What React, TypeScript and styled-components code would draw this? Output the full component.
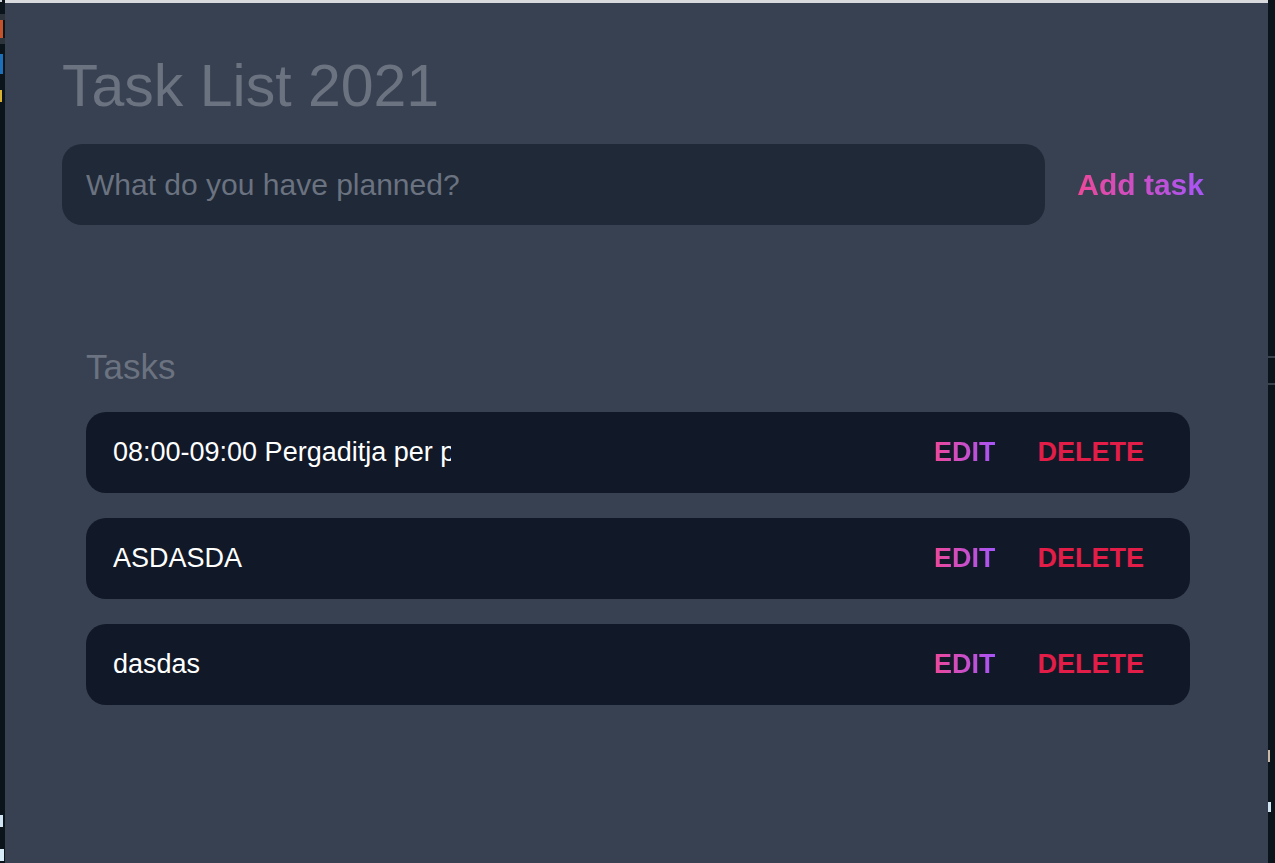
import React from "react";
import styled, { createGlobalStyle } from "styled-components";

const Global = createGlobalStyle`
  html, body { margin: 0; padding: 0; background: #0b131b; }
  body { font-family: "Liberation Sans", Arial, sans-serif; }
  * { box-sizing: border-box; }
`;

const Screen = styled.div`
  display: grid;
  grid-template-columns: 5px 1fr 7px;
  width: 1275px;
  height: 863px;
  overflow: hidden;
  background: #0b131b;
`;

const EdgeColumn = styled.div`
  display: flex;
  flex-direction: column;
  align-items: flex-start;
  background: #0b131b;
`;

const EdgeMark = styled.div<{ $top: number; $h: number; $w?: number; $color: string }>`
  margin-top: ${(p) => p.$top}px;
  height: ${(p) => p.$h}px;
  width: ${(p) => p.$w ?? 5}px;
  background: ${(p) => p.$color};
  flex-shrink: 0;
`;

const Panel = styled.main`
  background: #374151;
  border-top: 3px solid #d8dadd;
  padding: 53px 56px 0 57px;
  min-width: 0;
`;

const Title = styled.h1`
  margin: 0;
  font-size: 59px;
  line-height: 60px;
  font-weight: 400;
  color: #6b7280;
`;

const Form = styled.form`
  display: flex;
  align-items: stretch;
  margin-top: 28px;
`;

const TaskInput = styled.input`
  flex: 1;
  min-width: 0;
  height: 81px;
  padding: 0 24px;
  border: none;
  border-radius: 20px;
  background: #1f2937;
  color: #e5e7eb;
  font-family: inherit;
  font-size: 30px;
  outline: none;
  &::placeholder { color: #6b7280; }
`;

const GradientText = styled.span`
  background: linear-gradient(to right, #ec4899, #a855f7);
  -webkit-background-clip: text;
  background-clip: text;
  color: transparent;
`;

const AddButton = styled.button`
  margin-left: 24px;
  padding: 0 8px;
  border: none;
  background: transparent;
  font-family: inherit;
  font-size: 30px;
  font-weight: 700;
  cursor: pointer;
`;

const TasksSection = styled.section`
  margin-top: 124px;
  padding: 0 22px 0 24px;
`;

const SectionHeading = styled.h2`
  margin: 0;
  font-size: 35px;
  line-height: 35px;
  font-weight: 400;
  color: #6b7280;
`;

const TaskListBox = styled.div`
  display: flex;
  flex-direction: column;
  gap: 25px;
  margin-top: 28px;
`;

const TaskRow = styled.div`
  display: flex;
  align-items: center;
  height: 81px;
  padding: 0 24px 0 27px;
  border-radius: 20px;
  background: #111827;
`;

const TaskText = styled.input`
  width: 338px;
  padding: 0;
  border: none;
  background: transparent;
  color: #ffffff;
  font-family: inherit;
  font-size: 27px;
  outline: none;
`;

const Actions = styled.div`
  display: flex;
  margin-left: auto;
`;

const ActionButton = styled.button<{ $danger?: boolean }>`
  padding: 0 ${(p) => (p.$danger ? "22px" : "20px")} 0 22px;
  border: none;
  background: transparent;
  font-family: inherit;
  font-size: 27px;
  font-weight: 700;
  text-transform: uppercase;
  color: ${(p) => (p.$danger ? "#e11d48" : "inherit")};
  cursor: pointer;
`;

const tasks = ["08:00-09:00 Pergaditja per pune", "ASDASDA", "dasdas"];

export default function App() {
  return (
    <>
      <Global />
      <Screen>
        <EdgeColumn>
          <EdgeMark $top={0} $h={2} $w={2} $color="#cfd3d8" />
          <EdgeMark $top={12} $h={6} $color="#2d343c" />
          <EdgeMark $top={0} $h={18} $w={3} $color="#c4532b" />
          <EdgeMark $top={0} $h={6} $color="#2d343c" />
          <EdgeMark $top={10} $h={20} $w={3} $color="#1d6fb8" />
          <EdgeMark $top={16} $h={12} $w={2} $color="#d8b230" />
          <EdgeMark $top={713} $h={12} $w={3} $color="#cfe3f2" />
          <EdgeMark $top={22} $h={12} $w={4} $color="#d6ecf8" />
        </EdgeColumn>
        <Panel>
          <Title>Task List 2021</Title>
          <Form onSubmit={(e) => e.preventDefault()}>
            <TaskInput placeholder="What do you have planned?" />
            <AddButton type="submit">
              <GradientText>Add task</GradientText>
            </AddButton>
          </Form>
          <TasksSection>
            <SectionHeading>Tasks</SectionHeading>
            <TaskListBox>
              {tasks.map((t) => (
                <TaskRow key={t}>
                  <TaskText type="text" value={t} readOnly />
                  <Actions>
                    <ActionButton>
                      <GradientText>Edit</GradientText>
                    </ActionButton>
                    <ActionButton $danger>Delete</ActionButton>
                  </Actions>
                </TaskRow>
              ))}
            </TaskListBox>
          </TasksSection>
        </Panel>
        <EdgeColumn>
          <EdgeMark $top={356} $h={2} $w={7} $color="#39414c" />
          <EdgeMark $top={25} $h={2} $w={7} $color="#39414c" />
          <EdgeMark $top={365} $h={12} $w={2} $color="#c9b9a5" />
          <EdgeMark $top={40} $h={10} $w={3} $color="#cfe3f2" />
        </EdgeColumn>
      </Screen>
    </>
  );
}
